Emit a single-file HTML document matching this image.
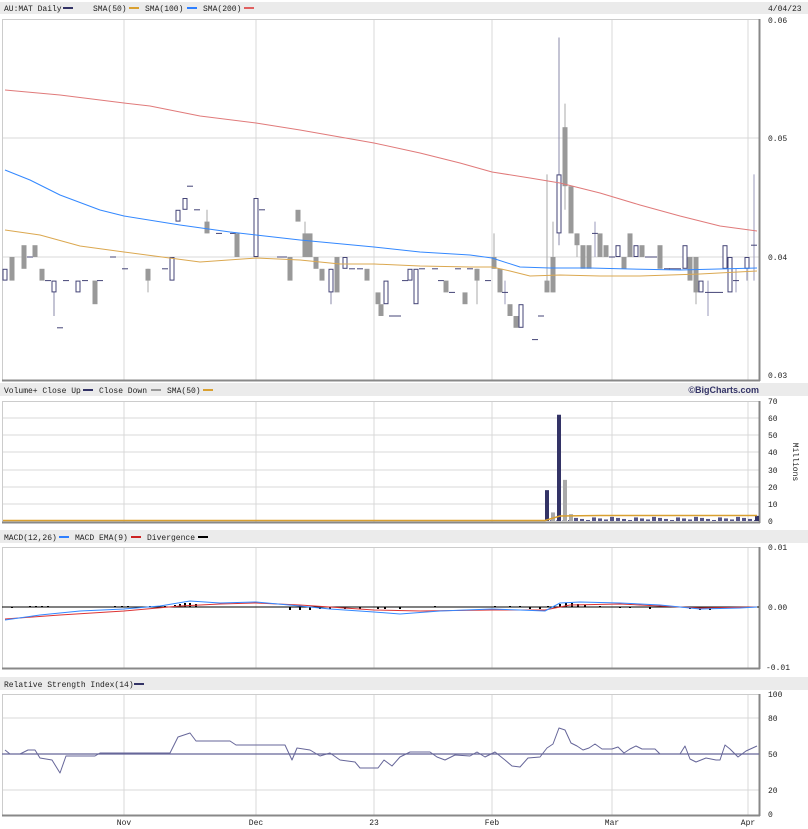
<!DOCTYPE html>
<html><head><meta charset="utf-8">
<style>
html,body{margin:0;padding:0;background:#fff;}
body{width:808px;height:829px;overflow:hidden;position:relative;font-family:"Liberation Mono","DejaVu Sans Mono",monospace;font-size:8px;color:#222;}
svg{position:absolute;left:0;top:0;}
</style></head><body>
<svg id="s" width="808" height="829" xmlns="http://www.w3.org/2000/svg" font-family="Liberation Mono, DejaVu Sans Mono, monospace" font-size="8" fill="#222">
<rect x="0" y="2" width="808" height="12" fill="#ebebeb"/>
<rect x="0" y="383" width="808" height="13" fill="#ebebeb"/>
<rect x="0" y="530" width="808" height="13" fill="#ebebeb"/>
<rect x="0" y="677" width="808" height="13" fill="#ebebeb"/>
<text x="4" y="11">AU:MAT Daily</text><rect x="63" y="7" width="10" height="2" fill="#333366"/>
<text x="93" y="11">SMA(50)</text><rect x="129" y="7" width="10" height="2" fill="#d9a030"/>
<text x="145" y="11">SMA(100)</text><rect x="187" y="7" width="10" height="2" fill="#2f80ff"/>
<text x="203" y="11">SMA(200)</text><rect x="244" y="7" width="10" height="2" fill="#e06060"/>
<text x="768" y="11">4/04/23</text>
<text x="4" y="393">Volume+ Close Up</text><rect x="83" y="389" width="10" height="2" fill="#333366"/>
<text x="99" y="393">Close Down</text><rect x="151" y="389" width="10" height="2" fill="#999"/>
<text x="167" y="393">SMA(50)</text><rect x="203" y="389" width="10" height="2" fill="#d9a030"/>
<text x="759" y="393" text-anchor="end" font-family="Liberation Sans, sans-serif" font-weight="bold" font-size="9" fill="#333366">©BigCharts.com</text>
<text x="4" y="540">MACD(12,26)</text><rect x="59" y="536" width="10" height="2" fill="#2f80ff"/>
<text x="75" y="540">MACD EMA(9)</text><rect x="131" y="536" width="10" height="2" fill="#cc2222"/>
<text x="147" y="540">Divergence</text><rect x="198" y="536" width="10" height="2" fill="#000"/>
<text x="4" y="687">Relative Strength Index(14)</text><rect x="134" y="683" width="10" height="2" fill="#333366"/>
<g id="grid"></g>
<g id="plots"></g>
<text x="768" y="23">0.06</text><text x="768" y="141">0.05</text><text x="768" y="260">0.04</text><text x="768" y="378">0.03</text>
<text x="768" y="404">70</text><text x="768" y="421">60</text><text x="768" y="438">50</text><text x="768" y="455">40</text><text x="768" y="473">30</text><text x="768" y="490">20</text><text x="768" y="507">10</text><text x="768" y="524">0</text>
<text x="793" y="462" transform="rotate(90 793 462)" text-anchor="middle">Millions</text>
<text x="768" y="550">0.01</text><text x="768" y="610">0.00</text><text x="766" y="670">-0.01</text>
<text x="768" y="697">100</text><text x="768" y="721">80</text><text x="768" y="757">50</text><text x="768" y="793">20</text><text x="768" y="817">0</text>
<g text-anchor="middle"><text x="124" y="825">Nov</text><text x="256" y="825">Dec</text><text x="374" y="825">23</text><text x="492" y="825">Feb</text><text x="612" y="825">Mar</text><text x="748" y="825">Apr</text></g>
</svg>
<script>
var NS="http://www.w3.org/2000/svg";
function el(g,t,a){var e=document.createElementNS(NS,t);for(var k in a)e.setAttribute(k,a[k]);document.getElementById(g).appendChild(e);return e;}
var VX=[124,256,374,492,612,748];
var panels=[[19,380,[138,257]],[401,522,[418,435,452,470,487,504]],[547,668,[]],[694,815,[718,790]]];
panels.forEach(function(p){
 el("grid","rect",{x:2,y:p[0],width:757,height:p[1]-p[0],fill:"#fff",stroke:"none"});
 VX.forEach(function(x){el("grid","line",{x1:x,y1:p[0],x2:x,y2:p[1],stroke:"#d8d8d8","stroke-width":1});});
 p[2].forEach(function(y){el("grid","line",{x1:2,y1:y,x2:759,y2:y,stroke:"#d8d8d8","stroke-width":1});});
 el("grid","line",{x1:2.5,y1:p[0],x2:2.5,y2:p[1],stroke:"#ccc"});
 el("grid","line",{x1:2,y1:p[0]+.5,x2:759,y2:p[0]+.5,stroke:"#ccc"});
 el("grid","line",{x1:759.5,y1:p[0],x2:759.5,y2:p[1]+1,stroke:"#888","stroke-width":2});
 el("grid","line",{x1:2,y1:p[1]+.5,x2:760,y2:p[1]+.5,stroke:"#888","stroke-width":2});
});
function Y(p){return 375-(p-30)*11.8;}
var C=[[5,"h",38,39],[12,"f",38,40],[24,"f",39,41],[30,"d",40],[35,"f",40,41],[42,"f",38,39],[48,"d",38],[54,"h",37,38,38,35],[60,"d",34],[66,"d",38],[78,"h",37,38],[85,"d",38],[95,"f",36,38],[100,"d",38],
[113,"d",40],[125,"d",39],[148,"f",38,39,39,37],[165,"d",39],[172,"h",38,40],[178,"h",43,44],[185,"h",44,45],[190,"d",46],[197,"d",44],[207,"f",42,43,44,42],[219,"d",42],[233,"d",42],[237,"f",40,42],
[256,"h",40,45],[262,"d",44],[280,"d",40],[284,"d",40],[290,"f",38,40],[298,"f",43,44],[305,"f",40,42,43,40],[310,"f",40,42],[316,"f",39,40],[322,"f",38,39],[331,"h",37,39,39,36],[337,"f",37,40],[345,"h",39,40],[352,"d",39],[360,"d",39],[367,"f",38,39],[378,"f",36,37],
[381,"f",35,36],[386,"h",36,38],[392,"d",35],[398,"d",35],[405,"d",38],[410,"h",38,39],[416,"h",36,39],[422,"d",39],[435,"d",39],[441,"d",38],[446,"f",37,38],[452,"d",37],[458,"d",39],[465,"f",36,37],[470,"d",39],[477,"f",38,39,39,36],[488,"d",38],[494,"f",39,40,42,39],[500,"f",37,39],[505,"d",37,38,36],[510,"f",35,36],[516,"f",34,35],[521,"h",34,36],[535,"d",33],[541,"d",35],
[547,"f",37,38,47,37],[553,"f",37,40,43,37],[559,"h",42,47,58.6,41],[565,"f",46,51,53,44],[571,"f",42,46],[577,"f",41,42,42,40],[583,"f",39,41],[589,"f",39,41],[595,"d",42,43,40],[600,"f",40,42],[606,"f",40,41],[612,"d",40],[618,"h",40,41],[624,"f",39,40],[630,"f",40,42],[636,"h",40,41],[642,"f",40,41],[648,"d",40],[654,"d",40],[660,"f",39,41],[667,"d",39],[672,"d",39],[678,"d",39],[685,"h",39,41],[690,"f",38,40],[696,"f",37,40,40,36],[701,"h",37,38],[708,"d",37,38,35],[714,"d",37],[720,"d",37],[725,"h",39,41],[730,"h",37,40],[736,"d",38,39,37],[747,"h",39,40,40,38],[754,"d",41,47,38]];
C.forEach(function(c){
 var x=c[0],t=c[1];
 if(t=="d"){
  if(c[3]!==undefined){el("plots","line",{x1:x,y1:Y(c[3]),x2:x,y2:Y(c[4]!==undefined?c[4]:c[2]),stroke:"#9999bb"});}
  el("plots","line",{x1:x-3,y1:Y(c[2]),x2:x+3,y2:Y(c[2]),stroke:"#444477"});return;}
 if(c[4]!==undefined){el("plots","line",{x1:x,y1:Y(c[4]),x2:x,y2:Y(c[5]),stroke:t=="h"?"#8888aa":"#aaa"});}
 var y1=Y(c[3]),y2=Y(c[2]);
 if(t=="f")el("plots","rect",{x:x-2.5,y:y1,width:5,height:y2-y1,fill:"#999"});
 else el("plots","rect",{x:x-2,y:y1+.5,width:4,height:y2-y1-1,fill:"#fff",stroke:"#444477","stroke-width":1});
});
function pl(pts,col,w){el("plots","polyline",{points:pts,fill:"none",stroke:col,"stroke-width":w||1,"stroke-linejoin":"round"});}
pl("5,90 60,95 124,103 150,106 200,116 256,123 300,130 374,143 420,153 460,163 492,172 530,178 560,183 600,193 640,205 680,216 720,226 757,231","#e07a7a");
pl("5,170 30,180 60,195 100,210 124,216 180,225 230,232 256,235 300,240 374,247 420,252 470,255 492,258 520,267 550,268 590,268 630,269 680,270 757,268","#3388ff");
pl("5,230 40,235 80,246 124,252 200,262 256,258 300,260 340,264 374,264 420,266 470,267 492,267 510,271 530,276 560,275 600,276 640,276 700,274 757,271","#dba850");
function VY(v){return 521-v*1.714;}
for(var x=6;x<757;x+=6){var r=(x*37)%7;var v=(x>570)?0.6+r*0.3:0.2+r*0.06;var up=((x*11)%3)==0;
 el("plots","rect",{x:x-2,y:VY(v),width:4,height:521-VY(v),fill:up?"#555588":"#bbb"});}
[[547,18,"#333366"],[553,5,"#aaa"],[559,62,"#333366"],[565,24,"#aaa"],[571,4,"#aaa"],[757,3,"#333366"]].forEach(function(b){
 el("plots","rect",{x:b[0]-2,y:VY(b[1]),width:4,height:521-VY(b[1]),fill:b[2]});});
pl("3,520.5 545,520.5 560,516 600,515.5 757,515.5","#d9a030",1.5);
el("plots","line",{x1:2,y1:607,x2:759,y2:607,stroke:"#000","stroke-width":1});
[[12,608],[30,606],[36,606],[42,606],[48,606],[115,606],[122,606],[128,606],[150,606],[165,606],[175,605],[180,604],[185,603],[190,603],[196,604],[290,610],[300,610],[310,610],[320,609],[330,609],[345,609],[360,609],[378,609],[385,609],[400,609],[435,606],[495,606],[510,606],[520,606],[530,609],[540,609],[548,607],[554,607],[560,604],[566,603],[572,603],[578,604],[585,605],[600,607],[620,608],[630,608],[650,609],[690,609],[700,610],[710,610],[720,609]].forEach(function(d){
 var y=d[1];el("plots","line",{x1:d[0],y1:607,x2:d[0],y2:y==607?606:y,stroke:"#000","stroke-width":2});});
pl("5,619 60,615 124,611 180,606 220,604 256,603 300,605 374,610 420,611 492,610 545,610 570,605 620,604 660,606 700,608 757,607","#dd3333");
pl("5,620 40,615 80,611 124,609 160,606 190,601 220,603 256,602 300,606 330,609 374,612 400,614 440,611 492,609 520,610 545,611 560,603 580,602 620,603 660,605 700,609 740,608 757,607","#3388ff");
el("plots","line",{x1:2,y1:754,x2:759,y2:754,stroke:"#666699","stroke-width":1.2});
pl("5,750 10,754 20,754 28,750 35,750 40,758 52,760 60,773 66,756 95,756 100,753 124,753 170,753 178,737 190,733 196,741 230,741 236,745 285,745 292,760 297,748 310,750 320,756 330,753 340,760 355,762 360,768 378,768 384,760 392,766 400,757 410,752 430,752 437,757 445,760 455,755 470,756 477,752 485,757 495,752 505,760 512,766 520,767 528,758 540,757 547,748 553,744 559,728 565,730 571,743 577,746 583,750 589,748 595,744 602,749 612,749 618,747 624,753 630,749 636,746 642,749 655,749 660,754 680,754 685,746 690,759 696,762 701,760 706,758 716,760 720,760 725,745 730,749 738,757 746,751 757,746","#666699",1);
</script>
</body></html>
